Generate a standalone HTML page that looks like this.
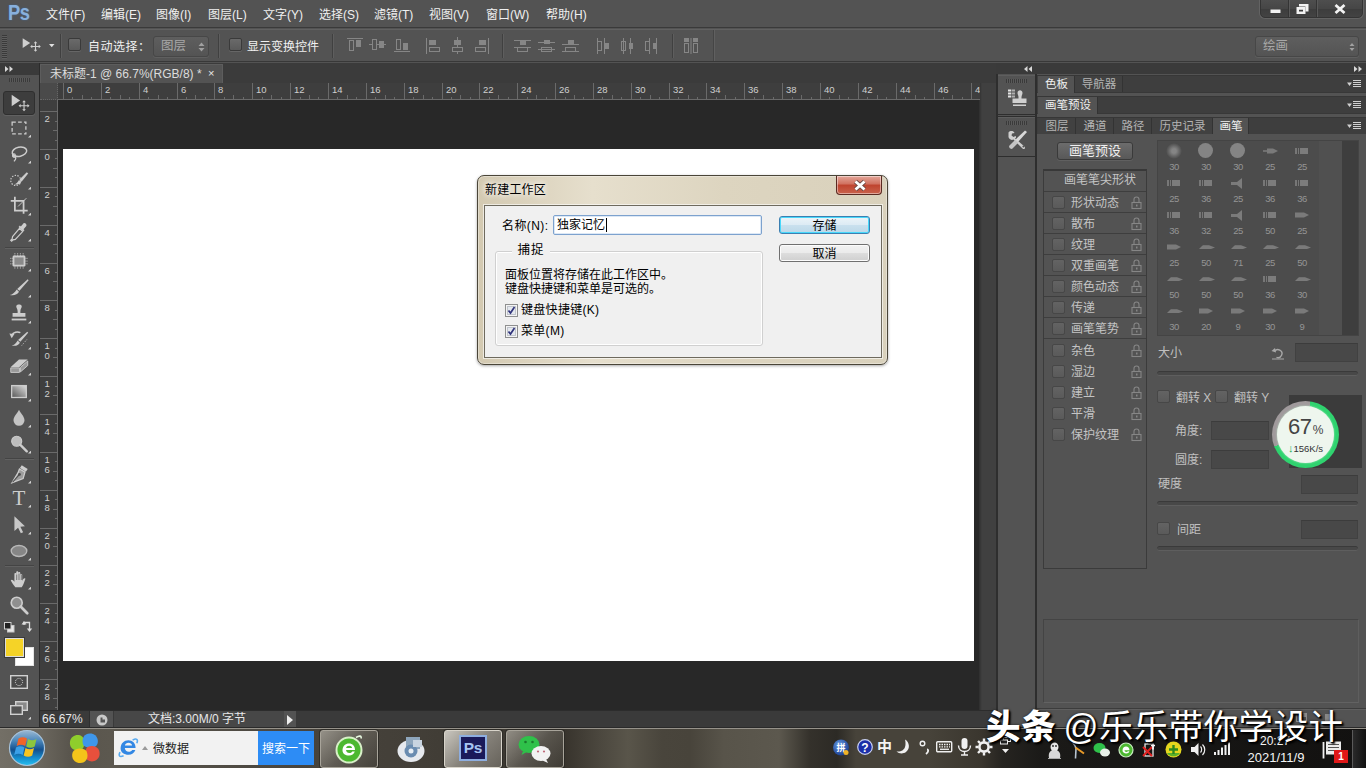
<!DOCTYPE html>
<html lang="zh-CN"><head><meta charset="utf-8"><title>Photoshop</title>
<style>
*{box-sizing:border-box;margin:0;padding:0}
html,body{width:1366px;height:768px;overflow:hidden;background:#535353}
body{font-family:"Liberation Sans","Noto Sans CJK SC",sans-serif;font-size:12px;color:#e6e6e6}
#root{position:relative;width:1366px;height:768px;overflow:hidden;background:#535353}
.abs{position:absolute}
/* menu bar */
#menubar{position:absolute;left:0;top:0;width:1366px;height:28px;background:#535353;border-bottom:1px solid #3a3a3a}
#menubar .ps{position:absolute;left:8px;top:-1px;font-size:22px;font-weight:bold;color:#88b0dc;letter-spacing:-0.5px;line-height:27px;transform:scaleX(0.83);transform-origin:0 0;text-shadow:0 0 2px rgba(60,110,170,0.8)}
#menubar .mi{position:absolute;top:1px;line-height:28px;font-size:12px;color:#f0f0f0;white-space:nowrap}
/* options bar */
#optbar{position:absolute;left:0;top:29px;width:1366px;height:33px;background:#535353;border-top:1px solid #616161;border-bottom:1px solid #383838}
/* doc tab strip */
#tabstrip{position:absolute;left:40px;top:63px;width:956px;height:20px;background:#3b3b3b}
#doctab{position:absolute;left:0;top:1px;width:183px;height:19px;background:#535353;border:1px solid #5d5d5d;border-bottom:none;color:#dcdcdc;font-size:12px;line-height:18px;padding-left:9px;white-space:nowrap}
/* canvas zone */
#canvaszone{position:absolute;left:40px;top:83px;width:940px;height:627px;background:#282828}
#paper{position:absolute;left:63px;top:149px;width:911px;height:512px;background:#fff}
#winctl{position:absolute;left:1260px;top:-1px;width:103px;height:19px;border:1px solid #343434;border-radius:0 0 5px 5px;background:linear-gradient(#4e4e4e,#464646 50%,#3d3d3d 55%,#434343);box-shadow:0 0 0 1px #636363;overflow:hidden}
.wdv{position:absolute;top:0;width:2px;height:19px;background:#343434;border-right:1px solid #5a5a5a}

.vsep{position:absolute;top:4px;width:2px;height:24px;background:#404040;border-right:1px solid #5e5e5e}
.cb{position:absolute;width:13px;height:13px;border:1px solid #3a3a3a;border-radius:2px;background:linear-gradient(#6a6a6a,#5a5a5a);box-shadow:0 1px 0 #666}
.dd{position:absolute;border:1px solid #474747;border-radius:3px;background:linear-gradient(#5e5e5e,#545454);box-shadow:0 1px 0 #5f5f5f}
#hruler{position:absolute;left:40px;top:83px;width:940px;height:17px;background:#3e3e3e;overflow:hidden}
#vruler{position:absolute;left:40px;top:100px;width:18px;height:610px;background:#3e3e3e;overflow:hidden}
#toolbar{position:absolute;left:0;top:63px;width:40px;height:665px;background:#535353;border-right:1px solid #2b2b2b}
#statusbar{position:absolute;left:40px;top:710px;width:956px;height:18px;background:#3a3a3a;border-top:1px solid #2c2c2c}
#dock{position:absolute;left:996px;top:63px;width:370px;height:665px;background:#535353}
#panels{position:absolute;left:41px;top:0;width:329px;height:665px}
.ptb{position:absolute;left:0;width:329px;height:18px;background:#3e3e3e;border-top:1px solid #373737;border-bottom:1px solid #383838}
.ptab{position:absolute;top:0;height:16px;line-height:17px;font-size:11.5px;color:#b4b4b4;text-align:center;padding-left:1px;border-right:1px solid #333;white-space:nowrap;background:#414141}
.ptab.on{background:#535353;color:#f0f0f0;height:17px;border-right:1px solid #333}
#pbody{position:absolute;left:0;top:71px;width:329px;height:575px;background:#535353;border-bottom:1px solid #3c3c3c;box-shadow:0 1px 0 #5f5f5f}
.pbtn{position:absolute;border:1px solid #3a3a3a;border-radius:3px;background:linear-gradient(#6c6c6c,#585858);color:#f0f0f0;font-size:13px;line-height:16px;text-align:center;box-shadow:0 1px 0 #606060}
#blist{position:absolute;left:6px;top:35px;width:104px;height:400px;border:1px solid #3b3b3b;border-top:2px solid #383838}
.lrow{position:absolute;left:0;width:102px}
.cb2{position:absolute;width:13px;height:13px;border:1px solid #474747;border-radius:2px;background:linear-gradient(#636363,#5a5a5a)}
#thumbs{position:absolute;left:120px;top:6px;width:202px;height:196px;background:#4c4c4c;border:1px solid #444;overflow:hidden}
#speed{position:absolute;left:276px;top:338px;width:67px;height:67px}
#speed .ring{position:absolute;left:0;top:0;width:67px;height:67px;border-radius:50%;background:conic-gradient(from 8deg,#2fd36f 0 67%,#a09a9c 67% 100%)}
#speed .inner{position:absolute;left:5px;top:5px;width:57px;height:57px;border-radius:50%;background:#eef6ee;color:#333;text-align:center;box-shadow:0 0 2px #bfe8cc}
#speed .pct{position:absolute;left:0;top:9px;width:57px;font-size:22px;line-height:24px;color:#444;letter-spacing:-0.3px}
#speed .pct span{font-size:12px;margin-left:1px}
#speed .rate{position:absolute;left:0;top:36px;width:57px;font-size:9.5px;line-height:12px;color:#333;white-space:nowrap}
#speed .rate b{color:#1fae55;font-weight:bold;font-size:11px}
#taskbar{position:absolute;left:0;top:728px;width:1366px;height:40px;background:linear-gradient(90deg,#736f66 0px,#6b675e 40px,#59554d 70px,#5c584f 110px,#48443d 300px,#433f38 410px,#38342d 565px,#4c483f 601px,#59554a 628px,#49453c 662px,#48443b 690px,#58544a 724px,#5c584e 779px,#34312b 810px,#2c2a25 837px,#47433a 856px,#47433a 929px,#3a362e 981px,#262420 1002px,#1b1a18 1040px,#121110 1366px);border-top:1px solid #96928a;box-shadow:0 -1px 0 #2a2a2a}
#orb{position:absolute;left:8px;top:0px;width:38px;height:38px}
.tbtn{position:absolute;top:1px;width:58px;height:38px;border:1px solid #a8a49a;border-radius:3px;background:linear-gradient(135deg,rgba(190,186,176,0.650),rgba(120,116,108,0.500) 50%,rgba(70,67,60,0.500));box-shadow:0 0 0 1px rgba(40,38,34,0.700)}
.tbtn.on{background:linear-gradient(135deg,rgba(225,222,214,0.850),rgba(160,156,148,0.750) 50%,rgba(120,116,108,0.700));border-color:#d8d4ca}
#dlg{position:absolute;left:477px;top:175px;width:411px;height:190px;border:1px solid #4a4538;border-radius:7px;background:linear-gradient(90deg,#d3c9b1,#e6dfcd 28%,#ddd5c0 60%,#d9d1bc);box-shadow:0 0 0 1px rgba(255,255,255,0.350) inset,0 1px 3px rgba(0,0,0,0.350)}
#dlg .ttl{position:absolute;left:7px;top:5px;line-height:18px;font-size:12px;color:#000;letter-spacing:0.200px;text-shadow:0 0 6px #fff,0 0 6px #fff}
#dlg .xbtn{position:absolute;left:358px;top:0;width:46px;height:19px;border:1px solid #5a2a22;border-top:none;border-radius:0 0 4px 4px;background:linear-gradient(#e4a79a,#d0705e 45%,#bf432e 50%,#c9634c);box-shadow:0 0 0 1px rgba(255,255,255,0.450) inset}
#dlg .client{position:absolute;left:6px;top:29px;width:398px;height:153px;background:#f0f0f0;border:1px solid #6e6a5e;box-shadow:0 0 0 1px rgba(255,255,255,0.600)}
.wbtn{position:absolute;width:91px;height:18px;border:1px solid #707070;border-radius:3px;background:linear-gradient(#f2f2f2,#ebebeb 48%,#dddddd 52%,#cfcfcf);color:#000;font-size:12px;line-height:19px;text-align:center;box-shadow:0 0 0 1px #fcfcfc inset}
.wbtn.def{border-color:#3c7fb1;box-shadow:0 0 0 1px #48d8fb inset;background:linear-gradient(#ecf4f9,#ddebf4 48%,#c9e0ee 52%,#bcd8e8)}
#wm{position:absolute;left:986px;top:703px;font-size:34.500px;line-height:48px;color:#fff;white-space:nowrap;text-shadow:2px 2px 2px #000,1px 1px 1px #000,0 0 3px rgba(0,0,0,0.600);letter-spacing:0.400px}
#wm b{letter-spacing:0.800px;margin-right:-3px}
#wm b{font-weight:900}

</style></head><body>
<div id="root">
<div id="menubar"><div class="ps">Ps</div><div class="mi" style="left:46px">文件(F)</div><div class="mi" style="left:101px">编辑(E)</div><div class="mi" style="left:156px">图像(I)</div><div class="mi" style="left:208px">图层(L)</div><div class="mi" style="left:263px">文字(Y)</div><div class="mi" style="left:319px">选择(S)</div><div class="mi" style="left:374px">滤镜(T)</div><div class="mi" style="left:429px">视图(V)</div><div class="mi" style="left:486px">窗口(W)</div><div class="mi" style="left:546px">帮助(H)</div><div id="winctl">
<div class="wdv" style="left:27px"></div><div class="wdv" style="left:55px"></div>
<svg class="abs" style="left:0;top:0" width="103" height="18" viewBox="0 0 103 18"><rect x="9.500" y="9.500" width="10" height="3.500" fill="#f2f2f2"/><path d="M38 4h9.500v7.500h-3v-5h-6.500z" fill="#f2f2f2"/><path d="M35.500 7h9v7h-9z M38 9.800v1.700h4v-1.700z" fill="#f2f2f2" fill-rule="evenodd"/><path d="M74.500 5l9 8M83.500 5l-9 8" stroke="#f2f2f2" stroke-width="2.800" fill="none"/></svg>
</div></div>
<div id="optbar"><div class="abs" style="left:2px;top:5px;width:5px;height:24px;background:repeating-linear-gradient(#3a3a3a 0 1px,#5e5e5e 1px 2px)"></div><svg class="abs" style="left:22px;top:8px" width="20" height="14" viewBox="0 0 20 14" ><path d="M0.700 0.300v9.800l7.500-5.200z" fill="#cfcfcf"/><path d="M13.500 4.500v8M9.500 8.500h8" stroke="#cfcfcf" stroke-width="1.100"/><path d="M13.500 3.200l-1.800 2.100h3.600zM13.500 13.800l-1.800-2.100h3.600zM8.200 8.500l2.100-1.800v3.600zM18.800 8.500l-2.100-1.800v3.600z" fill="#cfcfcf"/></svg><svg class="abs" style="left:49px;top:14px" width="6" height="4" viewBox="0 0 6 4" ><path d="M0 0h5.500l-2.750 3.200z" fill="#e0e0e0"/></svg><div class="vsep" style="left:60px"></div><div class="cb" style="left:68px;top:8px"></div><div class="abs" style="left:88px;top:1px;line-height:32px;font-size:12px;color:#f0f0f0;white-space:nowrap;letter-spacing:0.5px">自动选择：</div><div class="dd" style="left:153px;top:6px;width:56px;height:21px"><span style="position:absolute;left:7px;top:0;line-height:19px;color:#a8a8a8;font-size:12.5px">图层</span><svg class="abs" style="left:44px;top:5px" width="7" height="10" viewBox="0 0 7 10" ><path d="M0.500 4l3-3.500 3 3.500zM0.500 6l3 3.500 3-3.500z" fill="#a0a0a0"/></svg></div><div class="vsep" style="left:218px"></div><div class="cb" style="left:229px;top:8px"></div><div class="abs" style="left:247px;top:1px;line-height:32px;font-size:12px;color:#f0f0f0;white-space:nowrap">显示变换控件</div><div class="vsep" style="left:332px"></div><svg class="abs" style="left:346px;top:7px" width="20" height="18" viewBox="0 0 20 18" ><path d="M1 1.500h16" stroke="#868686"/><rect x="3.500" y="3.500" width="4" height="10" fill="none" stroke="#868686"/><rect x="10" y="3" width="5" height="7" fill="#868686"/></svg><svg class="abs" style="left:369px;top:7px" width="20" height="18" viewBox="0 0 20 18" ><path d="M0 7.500h17" stroke="#868686"/><rect x="3.500" y="2.500" width="4" height="10" fill="#535353" stroke="#868686"/><rect x="10" y="4" width="5" height="7" fill="#868686"/></svg><svg class="abs" style="left:393px;top:7px" width="20" height="18" viewBox="0 0 20 18" ><path d="M1 14.500h16" stroke="#868686"/><rect x="3.500" y="2.500" width="4" height="10" fill="none" stroke="#868686"/><rect x="10" y="6" width="5" height="7" fill="#868686"/></svg><svg class="abs" style="left:425px;top:7px" width="20" height="18" viewBox="0 0 20 18" ><path d="M1.500 1v16" stroke="#868686"/><rect x="4" y="3" width="7" height="5" fill="#868686"/><rect x="4.500" y="10.500" width="10" height="4" fill="none" stroke="#868686"/></svg><svg class="abs" style="left:449px;top:7px" width="20" height="18" viewBox="0 0 20 18" ><path d="M8.500 0v17" stroke="#868686"/><rect x="5" y="3" width="7" height="5" fill="#868686"/><rect x="3.500" y="10.500" width="10" height="4" fill="#535353" stroke="#868686"/></svg><svg class="abs" style="left:473px;top:7px" width="20" height="18" viewBox="0 0 20 18" ><path d="M15.500 1v16" stroke="#868686"/><rect x="6" y="3" width="7" height="5" fill="#868686"/><rect x="2.500" y="10.500" width="10" height="4" fill="none" stroke="#868686"/></svg><div class="vsep" style="left:502px"></div><svg class="abs" style="left:514px;top:7px" width="20" height="18" viewBox="0 0 20 18" ><path d="M0 3.500h17M0 10.500h17" stroke="#868686"/><rect x="6" y="4" width="6" height="4" fill="#868686"/><rect x="3.500" y="10.500" width="10" height="4" fill="none" stroke="#868686"/></svg><svg class="abs" style="left:538px;top:7px" width="20" height="18" viewBox="0 0 20 18" ><path d="M0 5.500h17M0 12.500h17" stroke="#868686"/><rect x="6" y="3" width="6" height="4" fill="#868686"/><rect x="3.500" y="10.500" width="10" height="4" fill="none" stroke="#868686"/></svg><svg class="abs" style="left:562px;top:7px" width="20" height="18" viewBox="0 0 20 18" ><path d="M0 7.500h17M0 14.500h17" stroke="#868686"/><rect x="6" y="3" width="6" height="4" fill="#868686"/><rect x="3.500" y="10.500" width="10" height="4" fill="none" stroke="#868686"/></svg><svg class="abs" style="left:595px;top:7px" width="20" height="18" viewBox="0 0 20 18" ><path d="M2.500 1v16M9.500 1v16" stroke="#868686"/><rect x="2.500" y="4.500" width="4" height="9" fill="none" stroke="#868686"/><rect x="10" y="6" width="4" height="6" fill="#868686"/></svg><svg class="abs" style="left:619px;top:7px" width="20" height="18" viewBox="0 0 20 18" ><path d="M4.500 1v16M11.500 1v16" stroke="#868686"/><rect x="2.500" y="4.500" width="4" height="9" fill="none" stroke="#868686"/><rect x="10" y="6" width="4" height="6" fill="#868686"/></svg><svg class="abs" style="left:643px;top:7px" width="20" height="18" viewBox="0 0 20 18" ><path d="M6.500 1v16M13.500 1v16" stroke="#868686"/><rect x="2.500" y="4.500" width="4" height="9" fill="none" stroke="#868686"/><rect x="10" y="6" width="4" height="6" fill="#868686"/></svg><div class="vsep" style="left:672px"></div><svg class="abs" style="left:683px;top:7px" width="18" height="18" viewBox="0 0 18 18" ><rect x="1" y="1" width="5" height="4" fill="#868686"/><rect x="10" y="1" width="5" height="4" fill="#868686"/><rect x="1.500" y="6.500" width="4" height="9" fill="none" stroke="#868686"/><rect x="10.500" y="6.500" width="4" height="9" fill="none" stroke="#868686"/><path d="M8 1v16" stroke="#868686"/></svg><div class="vsep" style="left:713px;top:0;height:31px;background:#454545;border-right:1px solid #606060"></div><div class="dd" style="left:1255px;top:6px;width:104px;height:21px"><span style="position:absolute;left:7px;top:0;line-height:19px;color:#a8a8a8;font-size:12.5px">绘画</span><svg class="abs" style="left:93px;top:5px" width="7" height="10" viewBox="0 0 7 10" ><path d="M0.500 4l2.500-3 2.500 3zM0.500 6l2.500 3 2.500-3z" fill="#a0a0a0"/></svg></div></div>
<div id="tabstrip"><div id="doctab">未标题-1 @ 66.7%(RGB/8) * <span style="position:absolute;left:167px;top:-1px;font-size:11px;color:#e8e8e8">×</span></div></div>
<div id="canvaszone"></div><div class="abs" style="left:979px;top:83px;width:17px;height:627px;background:linear-gradient(90deg,#2e2e2e,#404040 3px)"></div><div id="hruler"><svg class="abs" style="left:0;top:0" width="940" height="17" viewBox="0 0 940 17"><path d="M23.5 0v17M32.5 14v3M42.5 12v5M51.5 14v3M61.5 0v17M70.5 14v3M80.5 12v5M89.5 14v3M99.5 0v17M108.5 14v3M118.5 12v5M127.5 14v3M137.5 0v17M146.5 14v3M155.5 12v5M165.5 14v3M174.5 0v17M184.5 14v3M193.5 12v5M203.5 14v3M212.5 0v17M222.5 14v3M231.5 12v5M241.5 14v3M250.5 0v17M260.5 14v3M269.5 12v5M278.5 14v3M288.5 0v17M297.5 14v3M307.5 12v5M316.5 14v3M326.5 0v17M335.5 14v3M345.5 12v5M354.5 14v3M364.5 0v17M373.5 14v3M383.5 12v5M392.5 14v3M402.5 0v17M411.5 14v3M420.5 12v5M430.5 14v3M439.5 0v17M449.5 14v3M458.5 12v5M468.5 14v3M477.5 0v17M487.5 14v3M496.5 12v5M506.5 14v3M515.5 0v17M525.5 14v3M534.5 12v5M543.5 14v3M553.5 0v17M562.5 14v3M572.5 12v5M581.5 14v3M591.5 0v17M600.5 14v3M610.5 12v5M619.5 14v3M629.5 0v17M638.5 14v3M648.5 12v5M657.5 14v3M666.5 0v17M676.5 14v3M685.5 12v5M695.5 14v3M704.5 0v17M714.5 14v3M723.5 12v5M733.5 14v3M742.5 0v17M752.5 14v3M761.5 12v5M771.5 14v3M780.5 0v17M789.5 14v3M799.5 12v5M808.5 14v3M818.5 0v17M827.5 14v3M837.5 12v5M846.5 14v3M856.5 0v17M865.5 14v3M875.5 12v5M884.5 14v3M894.5 0v17M903.5 14v3M912.5 12v5M922.5 14v3M931.5 0v17" stroke="#6a6a6a" stroke-width="1" fill="none"/><path d="M18 16.500h922" stroke="#6a6a6a" stroke-width="1"/><text x="27" y="10" font-size="9.500" fill="#cfcfcf" font-family="Liberation Sans, sans-serif">0</text><text x="65" y="10" font-size="9.500" fill="#cfcfcf" font-family="Liberation Sans, sans-serif">2</text><text x="103" y="10" font-size="9.500" fill="#cfcfcf" font-family="Liberation Sans, sans-serif">4</text><text x="141" y="10" font-size="9.500" fill="#cfcfcf" font-family="Liberation Sans, sans-serif">6</text><text x="178" y="10" font-size="9.500" fill="#cfcfcf" font-family="Liberation Sans, sans-serif">8</text><text x="216" y="10" font-size="9.500" fill="#cfcfcf" font-family="Liberation Sans, sans-serif">10</text><text x="254" y="10" font-size="9.500" fill="#cfcfcf" font-family="Liberation Sans, sans-serif">12</text><text x="292" y="10" font-size="9.500" fill="#cfcfcf" font-family="Liberation Sans, sans-serif">14</text><text x="330" y="10" font-size="9.500" fill="#cfcfcf" font-family="Liberation Sans, sans-serif">16</text><text x="368" y="10" font-size="9.500" fill="#cfcfcf" font-family="Liberation Sans, sans-serif">18</text><text x="406" y="10" font-size="9.500" fill="#cfcfcf" font-family="Liberation Sans, sans-serif">20</text><text x="443" y="10" font-size="9.500" fill="#cfcfcf" font-family="Liberation Sans, sans-serif">22</text><text x="481" y="10" font-size="9.500" fill="#cfcfcf" font-family="Liberation Sans, sans-serif">24</text><text x="519" y="10" font-size="9.500" fill="#cfcfcf" font-family="Liberation Sans, sans-serif">26</text><text x="557" y="10" font-size="9.500" fill="#cfcfcf" font-family="Liberation Sans, sans-serif">28</text><text x="595" y="10" font-size="9.500" fill="#cfcfcf" font-family="Liberation Sans, sans-serif">30</text><text x="633" y="10" font-size="9.500" fill="#cfcfcf" font-family="Liberation Sans, sans-serif">32</text><text x="670" y="10" font-size="9.500" fill="#cfcfcf" font-family="Liberation Sans, sans-serif">34</text><text x="708" y="10" font-size="9.500" fill="#cfcfcf" font-family="Liberation Sans, sans-serif">36</text><text x="746" y="10" font-size="9.500" fill="#cfcfcf" font-family="Liberation Sans, sans-serif">38</text><text x="784" y="10" font-size="9.500" fill="#cfcfcf" font-family="Liberation Sans, sans-serif">40</text><text x="822" y="10" font-size="9.500" fill="#cfcfcf" font-family="Liberation Sans, sans-serif">42</text><text x="860" y="10" font-size="9.500" fill="#cfcfcf" font-family="Liberation Sans, sans-serif">44</text><text x="898" y="10" font-size="9.500" fill="#cfcfcf" font-family="Liberation Sans, sans-serif">46</text><text x="935" y="10" font-size="9.500" fill="#cfcfcf" font-family="Liberation Sans, sans-serif">48</text></svg><div class="abs" style="left:0;top:0;width:18px;height:17px;background:#4a4a4a;border-right:1px dotted #666;border-bottom:1px dotted #666"></div></div><div id="vruler"><svg class="abs" style="left:0;top:0" width="18" height="610" viewBox="0 0 18 610"><path d="M0 11.5h18M15 21.5h3M13 30.5h5M15 40.5h3M0 49.5h18M15 58.5h3M13 68.5h5M15 77.5h3M0 87.5h18M15 96.5h3M13 106.5h5M15 115.5h3M0 125.5h18M15 134.5h3M13 144.5h5M15 153.5h3M0 163.5h18M15 172.5h3M13 181.5h5M15 191.5h3M0 200.5h18M15 210.5h3M13 219.5h5M15 229.5h3M0 238.5h18M15 248.5h3M13 257.5h5M15 267.5h3M0 276.5h18M15 286.5h3M13 295.5h5M15 304.5h3M0 314.5h18M15 323.5h3M13 333.5h5M15 342.5h3M0 352.5h18M15 361.5h3M13 371.5h5M15 380.5h3M0 390.5h18M15 399.5h3M13 409.5h5M15 418.5h3M0 428.5h18M15 437.5h3M13 446.5h5M15 456.5h3M0 465.5h18M15 475.5h3M13 484.5h5M15 494.5h3M0 503.5h18M15 513.5h3M13 522.5h5M15 532.5h3M0 541.5h18M15 551.5h3M13 560.5h5M15 569.5h3M0 579.5h18M15 588.5h3M13 598.5h5M15 607.5h3" stroke="#6a6a6a" stroke-width="1" fill="none"/><path d="M17.500 0v610" stroke="#6a6a6a" stroke-width="1"/><text x="4.500" y="22" font-size="9.500" fill="#cfcfcf" font-family="Liberation Sans, sans-serif">2</text><text x="4.500" y="60" font-size="9.500" fill="#cfcfcf" font-family="Liberation Sans, sans-serif">0</text><text x="4.500" y="98" font-size="9.500" fill="#cfcfcf" font-family="Liberation Sans, sans-serif">2</text><text x="4.500" y="136" font-size="9.500" fill="#cfcfcf" font-family="Liberation Sans, sans-serif">4</text><text x="4.500" y="174" font-size="9.500" fill="#cfcfcf" font-family="Liberation Sans, sans-serif">6</text><text x="4.500" y="211" font-size="9.500" fill="#cfcfcf" font-family="Liberation Sans, sans-serif">8</text><text x="4.500" y="249" font-size="9.500" fill="#cfcfcf" font-family="Liberation Sans, sans-serif">1</text><text x="4.500" y="258.5" font-size="9.500" fill="#cfcfcf" font-family="Liberation Sans, sans-serif">0</text><text x="4.500" y="287" font-size="9.500" fill="#cfcfcf" font-family="Liberation Sans, sans-serif">1</text><text x="4.500" y="296.5" font-size="9.500" fill="#cfcfcf" font-family="Liberation Sans, sans-serif">2</text><text x="4.500" y="325" font-size="9.500" fill="#cfcfcf" font-family="Liberation Sans, sans-serif">1</text><text x="4.500" y="334.5" font-size="9.500" fill="#cfcfcf" font-family="Liberation Sans, sans-serif">4</text><text x="4.500" y="363" font-size="9.500" fill="#cfcfcf" font-family="Liberation Sans, sans-serif">1</text><text x="4.500" y="372.5" font-size="9.500" fill="#cfcfcf" font-family="Liberation Sans, sans-serif">6</text><text x="4.500" y="401" font-size="9.500" fill="#cfcfcf" font-family="Liberation Sans, sans-serif">1</text><text x="4.500" y="410.5" font-size="9.500" fill="#cfcfcf" font-family="Liberation Sans, sans-serif">8</text><text x="4.500" y="439" font-size="9.500" fill="#cfcfcf" font-family="Liberation Sans, sans-serif">2</text><text x="4.500" y="448.5" font-size="9.500" fill="#cfcfcf" font-family="Liberation Sans, sans-serif">0</text><text x="4.500" y="476" font-size="9.500" fill="#cfcfcf" font-family="Liberation Sans, sans-serif">2</text><text x="4.500" y="485.5" font-size="9.500" fill="#cfcfcf" font-family="Liberation Sans, sans-serif">2</text><text x="4.500" y="514" font-size="9.500" fill="#cfcfcf" font-family="Liberation Sans, sans-serif">2</text><text x="4.500" y="523.5" font-size="9.500" fill="#cfcfcf" font-family="Liberation Sans, sans-serif">4</text><text x="4.500" y="552" font-size="9.500" fill="#cfcfcf" font-family="Liberation Sans, sans-serif">2</text><text x="4.500" y="561.5" font-size="9.500" fill="#cfcfcf" font-family="Liberation Sans, sans-serif">6</text><text x="4.500" y="590" font-size="9.500" fill="#cfcfcf" font-family="Liberation Sans, sans-serif">2</text><text x="4.500" y="599.5" font-size="9.500" fill="#cfcfcf" font-family="Liberation Sans, sans-serif">8</text></svg></div><div id="paper"></div>
<div id="toolbar"><div class="abs" style="left:0;top:0;width:39px;height:12px;background:#3a3a3a"></div><svg class="abs" style="left:5px;top:3px" width="9" height="7" viewBox="0 0 9 7" ><path d="M0 0l3.500 3-3.500 3zM4.500 0l3.500 3-3.500 3z" fill="#d8d8d8"/></svg><div class="abs" style="left:9px;top:15px;width:21px;height:4px;background:repeating-linear-gradient(90deg,#3a3a3a 0 1px,#5a5a5a 1px 2px)"></div><div class="abs" style="left:3px;top:28px;width:32px;height:24px;background:#3d3d3d;border:1px solid #2f2f2f;border-radius:3px;box-shadow:0 1px 0 #616161"></div><svg class="abs" style="left:8px;top:29px" width="22" height="22" viewBox="0 0 24 24"><path d="M4 3v12.500l9.200-6.300z" fill="#cdcdcd"/><path d="M17.500 10.500v9M13 15h9" stroke="#cdcdcd" stroke-width="1.200"/><path d="M17.500 9l-2 2.300h4zM17.500 21l-2-2.300h4zM11.500 15l2.300-2v4zM23.500 15l-2.300-2v4z" fill="#cdcdcd"/></svg><svg class="abs" style="left:8px;top:54px" width="22" height="22" viewBox="0 0 24 24"><rect x="4.500" y="5.500" width="15" height="13" fill="none" stroke="#cdcdcd" stroke-width="1.400" stroke-dasharray="4 2.500"/></svg><svg class="abs" style="left:27.5px;top:71px" width="3.5" height="3.5" viewBox="0 0 3.5 3.5" ><path d="M3.500 0v3.500h-3.500z" fill="#d0d0d0"/></svg><svg class="abs" style="left:8px;top:80px" width="22" height="22" viewBox="0 0 24 24"><ellipse cx="12.500" cy="9.500" rx="8" ry="5" fill="none" stroke="#cdcdcd" stroke-width="1.600" transform="rotate(-12 12.500 9.500)"/><path d="M6.500 12.500c-1.500 1-1.500 3 0.500 3s2 2-0.500 4.500" fill="none" stroke="#cdcdcd" stroke-width="1.400"/><circle cx="6.500" cy="13.500" r="1.600" fill="none" stroke="#cdcdcd" stroke-width="1.200"/></svg><svg class="abs" style="left:27.5px;top:97px" width="3.5" height="3.5" viewBox="0 0 3.5 3.5" ><path d="M3.500 0v3.500h-3.500z" fill="#d0d0d0"/></svg><svg class="abs" style="left:8px;top:106px" width="22" height="22" viewBox="0 0 24 24"><circle cx="8.500" cy="12.500" r="5.500" fill="none" stroke="#cdcdcd" stroke-width="1.300" stroke-dasharray="1.500 1.500"/><path d="M20.500 3.500l1.500 1.500-7 8.500-2.500-2z" fill="#cdcdcd"/><path d="M12 12l2.500 2c-1 2.500-4 3.500-7 2.500 2-0.500 3-2 4.500-4.500z" fill="#cdcdcd"/></svg><svg class="abs" style="left:27.5px;top:123px" width="3.5" height="3.5" viewBox="0 0 3.5 3.5" ><path d="M3.500 0v3.500h-3.500z" fill="#d0d0d0"/></svg><svg class="abs" style="left:8px;top:132px" width="22" height="22" viewBox="0 0 24 24"><path d="M7.500 2v15h14M3 6.500h14v14" fill="none" stroke="#cdcdcd" stroke-width="1.900"/><path d="M20 3.500l-9 9" stroke="#cdcdcd" stroke-width="1"/></svg><svg class="abs" style="left:27.5px;top:149px" width="3.5" height="3.5" viewBox="0 0 3.5 3.5" ><path d="M3.500 0v3.500h-3.500z" fill="#d0d0d0"/></svg><svg class="abs" style="left:8px;top:158px" width="22" height="22" viewBox="0 0 24 24"><path d="M17 2.500c1.500-1 4 1.500 3 3l-3 3.500 1 1-1.500 1.500-5-5 1.500-1.500 1 1z" fill="#cdcdcd"/><path d="M12.500 8l3.500 3.500-8 8.500-2.500 0.500-1.500 1.500-1-1 1.500-1.500 0.500-2.500z" fill="none" stroke="#cdcdcd" stroke-width="1.300"/></svg><svg class="abs" style="left:27.5px;top:175px" width="3.5" height="3.5" viewBox="0 0 3.5 3.5" ><path d="M3.500 0v3.500h-3.500z" fill="#d0d0d0"/></svg><svg class="abs" style="left:8px;top:188px" width="22" height="22" viewBox="0 0 24 24"><rect x="5" y="5" width="14" height="12" rx="1.500" fill="#cdcdcd"/><path d="M7.500 2.500v17M10.500 2.500v17M13.500 2.500v17M16.500 2.500v17M2.500 8h19M2.500 11h19M2.500 14h19" stroke="#cdcdcd" stroke-width="1" stroke-dasharray="1.200 1"/><rect x="7" y="7" width="10" height="8" fill="#8a8a8a"/></svg><svg class="abs" style="left:27.5px;top:205px" width="3.5" height="3.5" viewBox="0 0 3.5 3.5" ><path d="M3.500 0v3.500h-3.500z" fill="#d0d0d0"/></svg><svg class="abs" style="left:8px;top:214px" width="22" height="22" viewBox="0 0 24 24"><path d="M21.500 2.500l1 1-10 11.500-2.500-2z" fill="#cdcdcd"/><path d="M9.500 13.500l2.500 2.500c-1.500 3-5.500 4.500-10 3.500 3-0.500 5-2.500 7.500-6z" fill="#cdcdcd"/></svg><svg class="abs" style="left:27.5px;top:231px" width="3.5" height="3.5" viewBox="0 0 3.5 3.5" ><path d="M3.500 0v3.500h-3.500z" fill="#d0d0d0"/></svg><svg class="abs" style="left:8px;top:240px" width="22" height="22" viewBox="0 0 24 24"><path d="M9 3.500c0-2.500 6-2.500 6 0 0 2-1.500 3-1.500 5.500v2h5.500v4h-14v-4h5.500v-2c0-2.500-1.500-3.500-1.500-5.500z" fill="#cdcdcd"/><rect x="4" y="17" width="16" height="2" fill="#cdcdcd"/></svg><svg class="abs" style="left:27.5px;top:257px" width="3.5" height="3.5" viewBox="0 0 3.5 3.5" ><path d="M3.500 0v3.500h-3.500z" fill="#d0d0d0"/></svg><svg class="abs" style="left:8px;top:266px" width="22" height="22" viewBox="0 0 24 24"><path d="M21 3l1 1-8.500 10-2.500-2z" fill="#cdcdcd"/><path d="M10.500 12.500l2.500 2.500c-1.500 3-5 4-9 3 3-0.500 4.500-2 6.500-5.500z" fill="#cdcdcd"/><path d="M4 7c2-3.500 6-4.500 9.500-3" fill="none" stroke="#cdcdcd" stroke-width="1.600"/><path d="M1.500 5l5.500 0.500-3 4.500z" fill="#cdcdcd"/><path d="M15 18l6-7" stroke="#cdcdcd" stroke-width="1" stroke-dasharray="1 1.500"/></svg><svg class="abs" style="left:27.5px;top:283px" width="3.5" height="3.5" viewBox="0 0 3.5 3.5" ><path d="M3.500 0v3.500h-3.500z" fill="#d0d0d0"/></svg><svg class="abs" style="left:8px;top:292px" width="22" height="22" viewBox="0 0 24 24"><path d="M3 13l9-8h9.500l-9 8z" fill="#cdcdcd"/><path d="M3 14v5h9.500v-5zM13.500 13.500l8-7v5l-8 7z" fill="#9a9a9a" stroke="#cdcdcd" stroke-width="1"/></svg><svg class="abs" style="left:27.5px;top:309px" width="3.5" height="3.5" viewBox="0 0 3.5 3.5" ><path d="M3.500 0v3.500h-3.500z" fill="#d0d0d0"/></svg><svg class="abs" style="left:8px;top:318px" width="22" height="22" viewBox="0 0 24 24"><defs><linearGradient id="gg" x1="0" y1="1" x2="1" y2="0"><stop offset="0" stop-color="#555"/><stop offset="1" stop-color="#ddd"/></linearGradient></defs><rect x="4" y="5" width="16" height="13" fill="url(#gg)" stroke="#cdcdcd" stroke-width="1.400"/></svg><svg class="abs" style="left:27.5px;top:335px" width="3.5" height="3.5" viewBox="0 0 3.5 3.5" ><path d="M3.500 0v3.500h-3.500z" fill="#d0d0d0"/></svg><svg class="abs" style="left:8px;top:344px" width="22" height="22" viewBox="0 0 24 24"><path d="M12 3c1.500 4 6 7 6 11.500a6 6 0 0 1-12 0c0-4.500 4.500-7.500 6-11.500z" fill="#c4c4c4"/></svg><svg class="abs" style="left:27.5px;top:361px" width="3.5" height="3.5" viewBox="0 0 3.5 3.5" ><path d="M3.500 0v3.500h-3.500z" fill="#d0d0d0"/></svg><svg class="abs" style="left:8px;top:370px" width="22" height="22" viewBox="0 0 24 24"><circle cx="9.500" cy="9" r="5.500" fill="#bdbdbd" stroke="#cdcdcd" stroke-width="1.200"/><path d="M13.500 13l7 7" stroke="#cdcdcd" stroke-width="2.600" stroke-linecap="round"/></svg><svg class="abs" style="left:27.5px;top:387px" width="3.5" height="3.5" viewBox="0 0 3.5 3.5" ><path d="M3.500 0v3.500h-3.500z" fill="#d0d0d0"/></svg><svg class="abs" style="left:8px;top:400px" width="22" height="22" viewBox="0 0 24 24"><path d="M15 2.500l6.500 4-2 3-6.500-4z" fill="#cdcdcd"/><path d="M12.500 6.500l6 3.500-2 7-12 4.500 6.500-11z" fill="#9c9c9c" stroke="#cdcdcd" stroke-width="1.400"/><path d="M5 21l7-8" stroke="#4a4a4a" stroke-width="1.200"/><circle cx="12.500" cy="12.500" r="1.500" fill="#4a4a4a"/></svg><svg class="abs" style="left:27.5px;top:417px" width="3.5" height="3.5" viewBox="0 0 3.5 3.5" ><path d="M3.500 0v3.500h-3.500z" fill="#d0d0d0"/></svg><svg class="abs" style="left:8px;top:424px" width="22" height="22" viewBox="0 0 24 24"><text x="12" y="20" text-anchor="middle" font-family="Liberation Serif, serif" font-size="23" fill="#cdcdcd">T</text></svg><svg class="abs" style="left:27.5px;top:441px" width="3.5" height="3.5" viewBox="0 0 3.5 3.5" ><path d="M3.500 0v3.500h-3.500z" fill="#d0d0d0"/></svg><svg class="abs" style="left:8px;top:451px" width="22" height="22" viewBox="0 0 24 24"><path d="M7 2.500v16l4-3.500 3 6 2.500-1.200-3-6 5-0.500z" fill="#c8c8c8"/></svg><svg class="abs" style="left:27.5px;top:468px" width="3.5" height="3.5" viewBox="0 0 3.5 3.5" ><path d="M3.500 0v3.500h-3.500z" fill="#d0d0d0"/></svg><svg class="abs" style="left:8px;top:477px" width="22" height="22" viewBox="0 0 24 24"><ellipse cx="12" cy="12" rx="8.500" ry="6" fill="#868686" stroke="#b8b8b8" stroke-width="1.500"/></svg><svg class="abs" style="left:27.5px;top:494px" width="3.5" height="3.5" viewBox="0 0 3.5 3.5" ><path d="M3.500 0v3.500h-3.500z" fill="#d0d0d0"/></svg><svg class="abs" style="left:8px;top:506px" width="22" height="22" viewBox="0 0 24 24"><path d="M8 20c-2-2.500-3.500-5-5-7.500 1-1.500 2.500-0.500 4 1.500v-8.500c0-1.500 2-1.500 2 0v-2c0-1.500 2.200-1.500 2.200 0v1c0-1.500 2.200-1.500 2.200 0v2c0-1.500 2.100-1.500 2.100 0v6.500c1-2 2-3.500 3.500-2.500-1 3-2 6-4 9.500z" fill="#cdcdcd"/><path d="M9.500 6v6M12 5v7M14.500 6v6" stroke="#535353" stroke-width="0.800"/></svg><svg class="abs" style="left:27.5px;top:523px" width="3.5" height="3.5" viewBox="0 0 3.5 3.5" ><path d="M3.500 0v3.500h-3.500z" fill="#d0d0d0"/></svg><svg class="abs" style="left:8px;top:531px" width="22" height="22" viewBox="0 0 24 24"><circle cx="9.500" cy="9.500" r="6" fill="#8f8f8f" stroke="#cdcdcd" stroke-width="1.800"/><path d="M14 14l7 7" stroke="#cdcdcd" stroke-width="3" stroke-linecap="round"/></svg><div class="abs" style="left:5px;top:184px;width:29px;height:2px;background:#444;border-bottom:1px solid #616161"></div><div class="abs" style="left:5px;top:395px;width:29px;height:2px;background:#444;border-bottom:1px solid #616161"></div><div class="abs" style="left:5px;top:502px;width:29px;height:2px;background:#444;border-bottom:1px solid #616161"></div><svg class="abs" style="left:3px;top:558px" width="13" height="13" viewBox="0 0 13 13" ><rect x="4.500" y="4.500" width="6.500" height="6.500" fill="#e8e8e8" stroke="#c8c8c8"/><rect x="1.500" y="1.500" width="6.500" height="6.500" fill="#222" stroke="#d0d0d0"/></svg><svg class="abs" style="left:21px;top:556px" width="14" height="14" viewBox="0 0 14 14" ><path d="M3 6v-2.500h5.500v6.500" fill="none" stroke="#ddd" stroke-width="1.300"/><path d="M0.500 5.500l2.500-3.500 2.500 3.500zM5.800 9.500h5.400l-2.700 3.500z" fill="#ddd"/></svg><div class="abs" style="left:15px;top:584px;width:19px;height:19px;background:#fff;border:1px solid #e4e4e4"></div><div class="abs" style="left:5px;top:575px;width:19px;height:19px;background:#f5d327;border:1px solid #dcdcdc;box-shadow:0 0 0 1px #3a3a3a"></div><svg class="abs" style="left:10px;top:612px" width="18" height="14" viewBox="0 0 18 14" ><rect x="0.700" y="0.700" width="16.600" height="12.600" fill="#4a4a4a" stroke="#d0d0d0" stroke-width="1.400"/><circle cx="9" cy="7" r="3.600" fill="none" stroke="#e0e0e0" stroke-width="1" stroke-dasharray="1 1"/></svg><svg class="abs" style="left:10px;top:638px" width="18" height="15" viewBox="0 0 18 15" ><rect x="5.700" y="0.700" width="11.600" height="8.600" fill="#8a8a8a" stroke="#d0d0d0" stroke-width="1.400"/><rect x="0.700" y="4.700" width="11.600" height="8.600" fill="#535353" stroke="#d0d0d0" stroke-width="1.400"/></svg><svg class="abs" style="left:27.5px;top:653px" width="3.5" height="3.5" viewBox="0 0 3.5 3.5" ><path d="M3.500 0v3.500h-3.500z" fill="#d0d0d0"/></svg></div>
<div id="statusbar"><div class="abs" style="left:2px;top:0;line-height:17px;font-size:12px;color:#e8e8e8">66.67%</div><div class="abs" style="left:49px;top:0;width:24px;height:17px;background:#535353;border-left:1px solid #2e2e2e"></div><svg class="abs" style="left:56px;top:3px" width="12" height="12" viewBox="0 0 12 12" ><circle cx="6" cy="6" r="5.500" fill="#c8c8c8"/><path d="M4.500 3.500v5h4.500v-3h-2.500v-2z" fill="#555"/></svg><div class="abs" style="left:73px;top:0;width:171px;height:17px;background:#474747;border-left:1px solid #3a3a3a"></div><div class="abs" style="left:108px;top:0;line-height:17px;font-size:12px;color:#e8e8e8;white-space:nowrap">文档:3.00M/0 字节</div><div class="abs" style="left:244px;top:0;width:12px;height:17px;background:#535353"></div><svg class="abs" style="left:246px;top:4px" width="8" height="10" viewBox="0 0 8 10" ><path d="M1 0l6 5-6 5z" fill="#eee"/></svg></div>
<div id="dock"><div class="abs" style="left:0;top:0;width:370px;height:11px;background:#3a3a3a"></div><svg class="abs" style="left:28px;top:3px" width="9" height="7" viewBox="0 0 9 7" ><path d="M3.500 0l-3.500 3 3.500 3zM8 0l-3.500 3 3.500 3z" fill="#d8d8d8"/></svg><svg class="abs" style="left:358px;top:3px" width="9" height="7" viewBox="0 0 9 7" ><path d="M0 0l3.500 3-3.500 3zM4.500 0l3.500 3-3.500 3z" fill="#d8d8d8"/></svg><div class="abs" style="left:0;top:11px;width:41px;height:654px;background:#535353;border-left:2px solid #2e2e2e;border-right:2px solid #2e2e2e"></div><div class="abs" style="left:2px;top:12px;width:37px;height:40px;border-bottom:1px solid #2e2e2e;border-top:1px solid #5e5e5e"></div><div class="abs" style="left:10px;top:16px;width:21px;height:4px;background:repeating-linear-gradient(90deg,#3a3a3a 0 1px,#5a5a5a 1px 2px)"></div><div class="abs" style="left:2px;top:54px;width:37px;height:40px;border-bottom:1px solid #2e2e2e;border-top:1px solid #5e5e5e"></div><div class="abs" style="left:10px;top:58px;width:21px;height:4px;background:repeating-linear-gradient(90deg,#3a3a3a 0 1px,#5a5a5a 1px 2px)"></div><div class="abs" style="left:2px;top:53px;width:37px;height:1px;background:#2e2e2e"></div><svg class="abs" style="left:11px;top:26px" width="22" height="20" viewBox="0 0 22 20" ><path d="M1 1.500h3M1 4.500h3M1 7.500h3" stroke="#e4e4e4" stroke-width="1.800"/><path d="M4.500 1.500h3.500M4.500 4.500h3.500M4.500 7.500h3.500" stroke="#b0b0b0" stroke-width="1.800"/><path d="M10.500 4c0-3.700 5-3.700 5 0 0 1.600-1 2.200-1 4.200v1.300h5v4.500h-14v-4.500h6v-1.300c0-2-1-2.600-1-4.200z" fill="#d0d0d0"/><rect x="6" y="15.500" width="13" height="1.500" fill="#d0d0d0"/></svg><svg class="abs" style="left:11px;top:67px" width="22" height="20" viewBox="0 0 22 20" ><path d="M1.500 2.500c1.500-2 5-2 6 0.500l-2.500 0.500-0.500 2 2 1.500 2-1c1 0.500 0.500 2-0.500 2.500l9.500 8c1.500 1.500-0.500 3.500-2 2l-9-9c-2.500 1.500-5.500-1-5-3.500z" fill="#cfcfcf"/><circle cx="16.500" cy="16.500" r="1.100" fill="#555"/><path d="M18 0.500l2 1.500-9 10-2.500-2.500z" fill="#d8d8d8"/><path d="M8 10l3 3-5.500 5.500c-1.500 1.500-4.500-1.500-3-3z" fill="#c4c4c4"/></svg><div id="panels"><div class="ptb" style="top:12px"><div class="ptab on" style="left:1px;width:37px">色板</div><div class="ptab" style="left:38px;width:48px">导航器</div><svg class="abs" style="left:310px;top:4px" width="16" height="9" viewBox="0 0 16 9" ><path d="M0 2.500h5l-2.500 3.500z" fill="#d0d0d0"/><path d="M6 0.500h8M6 2.500h8M6 4.500h8M6 6.500h8" stroke="#d0d0d0" stroke-width="1"/></svg></div><div class="ptb" style="top:33px"><div class="ptab on" style="left:1px;width:60px">画笔预设</div><svg class="abs" style="left:310px;top:4px" width="16" height="9" viewBox="0 0 16 9" ><path d="M0 2.500h5l-2.500 3.500z" fill="#d0d0d0"/><path d="M6 0.500h8M6 2.500h8M6 4.500h8M6 6.500h8" stroke="#d0d0d0" stroke-width="1"/></svg></div><div class="ptb" style="top:54px"><div class="ptab" style="left:1px;width:38px">图层</div><div class="ptab" style="left:39px;width:38px">通道</div><div class="ptab" style="left:77px;width:38px">路径</div><div class="ptab" style="left:115px;width:61px">历史记录</div><div class="ptab on" style="left:176px;width:36px">画笔</div><svg class="abs" style="left:310px;top:4px" width="16" height="9" viewBox="0 0 16 9" ><path d="M0 2.500h5l-2.500 3.500z" fill="#d0d0d0"/><path d="M6 0.500h8M6 2.500h8M6 4.500h8M6 6.500h8" stroke="#d0d0d0" stroke-width="1"/></svg></div><div id="pbody"><div class="pbtn" style="left:20px;top:8px;width:76px;height:18px">画笔预设</div><div id="blist"><div class="lrow" style="top:0;height:21px;border-bottom:1px solid #3e3e3e"><span style="position:absolute;left:20px;top:0;line-height:18px;font-size:12px;color:#c4c4c4">画笔笔尖形状</span></div><div class="lrow" style="top:21px;height:21px;border-bottom:1px solid #3e3e3e;"><div class="cb2" style="left:8px;top:4px"></div><span style="position:absolute;left:27px;top:1px;line-height:20px;font-size:12px;color:#c4c4c4">形状动态</span><svg class="abs" style="left:87px;top:4px" width="11" height="14" viewBox="0 0 11 14"><path d="M3 6v-2.500a2.500 2.500 0 0 1 5 0v2.500" fill="none" stroke="#868686" stroke-width="1.100"/><rect x="1" y="6.500" width="9" height="6" fill="none" stroke="#868686" stroke-width="1.100"/><rect x="5" y="8.500" width="1.500" height="2" fill="#868686"/></svg></div><div class="lrow" style="top:42px;height:21px;border-bottom:1px solid #3e3e3e;"><div class="cb2" style="left:8px;top:4px"></div><span style="position:absolute;left:27px;top:1px;line-height:20px;font-size:12px;color:#c4c4c4">散布</span><svg class="abs" style="left:87px;top:4px" width="11" height="14" viewBox="0 0 11 14"><path d="M3 6v-2.500a2.500 2.500 0 0 1 5 0v2.500" fill="none" stroke="#868686" stroke-width="1.100"/><rect x="1" y="6.500" width="9" height="6" fill="none" stroke="#868686" stroke-width="1.100"/><rect x="5" y="8.500" width="1.500" height="2" fill="#868686"/></svg></div><div class="lrow" style="top:63px;height:21px;border-bottom:1px solid #3e3e3e;"><div class="cb2" style="left:8px;top:4px"></div><span style="position:absolute;left:27px;top:1px;line-height:20px;font-size:12px;color:#c4c4c4">纹理</span><svg class="abs" style="left:87px;top:4px" width="11" height="14" viewBox="0 0 11 14"><path d="M3 6v-2.500a2.500 2.500 0 0 1 5 0v2.500" fill="none" stroke="#868686" stroke-width="1.100"/><rect x="1" y="6.500" width="9" height="6" fill="none" stroke="#868686" stroke-width="1.100"/><rect x="5" y="8.500" width="1.500" height="2" fill="#868686"/></svg></div><div class="lrow" style="top:84px;height:21px;border-bottom:1px solid #3e3e3e;"><div class="cb2" style="left:8px;top:4px"></div><span style="position:absolute;left:27px;top:1px;line-height:20px;font-size:12px;color:#c4c4c4">双重画笔</span><svg class="abs" style="left:87px;top:4px" width="11" height="14" viewBox="0 0 11 14"><path d="M3 6v-2.500a2.500 2.500 0 0 1 5 0v2.500" fill="none" stroke="#868686" stroke-width="1.100"/><rect x="1" y="6.500" width="9" height="6" fill="none" stroke="#868686" stroke-width="1.100"/><rect x="5" y="8.500" width="1.500" height="2" fill="#868686"/></svg></div><div class="lrow" style="top:105px;height:21px;border-bottom:1px solid #3e3e3e;"><div class="cb2" style="left:8px;top:4px"></div><span style="position:absolute;left:27px;top:1px;line-height:20px;font-size:12px;color:#c4c4c4">颜色动态</span><svg class="abs" style="left:87px;top:4px" width="11" height="14" viewBox="0 0 11 14"><path d="M3 6v-2.500a2.500 2.500 0 0 1 5 0v2.500" fill="none" stroke="#868686" stroke-width="1.100"/><rect x="1" y="6.500" width="9" height="6" fill="none" stroke="#868686" stroke-width="1.100"/><rect x="5" y="8.500" width="1.500" height="2" fill="#868686"/></svg></div><div class="lrow" style="top:126px;height:21px;border-bottom:1px solid #3e3e3e;"><div class="cb2" style="left:8px;top:4px"></div><span style="position:absolute;left:27px;top:1px;line-height:20px;font-size:12px;color:#c4c4c4">传递</span><svg class="abs" style="left:87px;top:4px" width="11" height="14" viewBox="0 0 11 14"><path d="M3 6v-2.500a2.500 2.500 0 0 1 5 0v2.500" fill="none" stroke="#868686" stroke-width="1.100"/><rect x="1" y="6.500" width="9" height="6" fill="none" stroke="#868686" stroke-width="1.100"/><rect x="5" y="8.500" width="1.500" height="2" fill="#868686"/></svg></div><div class="lrow" style="top:147px;height:21px;border-bottom:1px solid #3e3e3e;"><div class="cb2" style="left:8px;top:4px"></div><span style="position:absolute;left:27px;top:1px;line-height:20px;font-size:12px;color:#c4c4c4">画笔笔势</span><svg class="abs" style="left:87px;top:4px" width="11" height="14" viewBox="0 0 11 14"><path d="M3 6v-2.500a2.500 2.500 0 0 1 5 0v2.500" fill="none" stroke="#868686" stroke-width="1.100"/><rect x="1" y="6.500" width="9" height="6" fill="none" stroke="#868686" stroke-width="1.100"/><rect x="5" y="8.500" width="1.500" height="2" fill="#868686"/></svg></div><div class="lrow" style="top:169px;height:21px;"><div class="cb2" style="left:8px;top:4px"></div><span style="position:absolute;left:27px;top:1px;line-height:20px;font-size:12px;color:#c4c4c4">杂色</span><svg class="abs" style="left:87px;top:4px" width="11" height="14" viewBox="0 0 11 14"><path d="M3 6v-2.500a2.500 2.500 0 0 1 5 0v2.500" fill="none" stroke="#868686" stroke-width="1.100"/><rect x="1" y="6.500" width="9" height="6" fill="none" stroke="#868686" stroke-width="1.100"/><rect x="5" y="8.500" width="1.500" height="2" fill="#868686"/></svg></div><div class="lrow" style="top:190px;height:21px;"><div class="cb2" style="left:8px;top:4px"></div><span style="position:absolute;left:27px;top:1px;line-height:20px;font-size:12px;color:#c4c4c4">湿边</span><svg class="abs" style="left:87px;top:4px" width="11" height="14" viewBox="0 0 11 14"><path d="M3 6v-2.500a2.500 2.500 0 0 1 5 0v2.500" fill="none" stroke="#868686" stroke-width="1.100"/><rect x="1" y="6.500" width="9" height="6" fill="none" stroke="#868686" stroke-width="1.100"/><rect x="5" y="8.500" width="1.500" height="2" fill="#868686"/></svg></div><div class="lrow" style="top:211px;height:21px;"><div class="cb2" style="left:8px;top:4px"></div><span style="position:absolute;left:27px;top:1px;line-height:20px;font-size:12px;color:#c4c4c4">建立</span><svg class="abs" style="left:87px;top:4px" width="11" height="14" viewBox="0 0 11 14"><path d="M3 6v-2.500a2.500 2.500 0 0 1 5 0v2.500" fill="none" stroke="#868686" stroke-width="1.100"/><rect x="1" y="6.500" width="9" height="6" fill="none" stroke="#868686" stroke-width="1.100"/><rect x="5" y="8.500" width="1.500" height="2" fill="#868686"/></svg></div><div class="lrow" style="top:232px;height:21px;"><div class="cb2" style="left:8px;top:4px"></div><span style="position:absolute;left:27px;top:1px;line-height:20px;font-size:12px;color:#c4c4c4">平滑</span><svg class="abs" style="left:87px;top:4px" width="11" height="14" viewBox="0 0 11 14"><path d="M3 6v-2.500a2.500 2.500 0 0 1 5 0v2.500" fill="none" stroke="#868686" stroke-width="1.100"/><rect x="1" y="6.500" width="9" height="6" fill="none" stroke="#868686" stroke-width="1.100"/><rect x="5" y="8.500" width="1.500" height="2" fill="#868686"/></svg></div><div class="lrow" style="top:253px;height:21px;"><div class="cb2" style="left:8px;top:4px"></div><span style="position:absolute;left:27px;top:1px;line-height:20px;font-size:12px;color:#c4c4c4">保护纹理</span><svg class="abs" style="left:87px;top:4px" width="11" height="14" viewBox="0 0 11 14"><path d="M3 6v-2.500a2.500 2.500 0 0 1 5 0v2.500" fill="none" stroke="#868686" stroke-width="1.100"/><rect x="1" y="6.500" width="9" height="6" fill="none" stroke="#868686" stroke-width="1.100"/><rect x="5" y="8.500" width="1.500" height="2" fill="#868686"/></svg></div></div><div id="thumbs"><div class="abs" style="left:8px;top:2px;width:16px;height:16px;border-radius:8px;background:radial-gradient(#858585 20%,rgba(133,133,133,0) 70%)"></div><div class="abs" style="left:4px;top:20px;width:24px;text-align:center;font-size:9.500px;letter-spacing:-0.500px;line-height:12px;color:#959595">30</div><div class="abs" style="left:40px;top:2px;width:15px;height:15px;border-radius:8px;background:#848484"></div><div class="abs" style="left:36px;top:20px;width:24px;text-align:center;font-size:9.500px;letter-spacing:-0.500px;line-height:12px;color:#959595">30</div><div class="abs" style="left:72px;top:2px;width:15px;height:15px;border-radius:8px;background:#848484"></div><div class="abs" style="left:68px;top:20px;width:24px;text-align:center;font-size:9.500px;letter-spacing:-0.500px;line-height:12px;color:#959595">30</div><svg class="abs" style="left:104px;top:6px" width="18" height="8" viewBox="0 0 18 8" ><path d="M1 3h4v2h-4z" fill="#707070"/><path d="M5 1.500h6l5 2.500-5 2.500h-6z" fill="#7a7a7a"/></svg><div class="abs" style="left:100px;top:20px;width:24px;text-align:center;font-size:9.500px;letter-spacing:-0.500px;line-height:12px;color:#959595">25</div><svg class="abs" style="left:136px;top:6px" width="18" height="8" viewBox="0 0 18 8" ><path d="M1 1h2v6h-2zM4 1h1v6h-1z" fill="#777"/><rect x="6" y="1" width="8" height="6" fill="#7c7c7c"/></svg><div class="abs" style="left:132px;top:20px;width:24px;text-align:center;font-size:9.500px;letter-spacing:-0.500px;line-height:12px;color:#959595">25</div><svg class="abs" style="left:8px;top:38px" width="18" height="8" viewBox="0 0 18 8" ><path d="M1 1h2v6h-2zM4 1h1v6h-1z" fill="#777"/><rect x="6" y="1" width="8" height="6" fill="#7c7c7c"/></svg><div class="abs" style="left:4px;top:52px;width:24px;text-align:center;font-size:9.500px;letter-spacing:-0.500px;line-height:12px;color:#959595">25</div><svg class="abs" style="left:40px;top:38px" width="18" height="8" viewBox="0 0 18 8" ><path d="M1 1h2v6h-2zM4 1h1v6h-1z" fill="#777"/><rect x="6" y="1" width="8" height="6" fill="#7c7c7c"/></svg><div class="abs" style="left:36px;top:52px;width:24px;text-align:center;font-size:9.500px;letter-spacing:-0.500px;line-height:12px;color:#959595">36</div><svg class="abs" style="left:72px;top:36px" width="18" height="12" viewBox="0 0 18 12" ><path d="M1 5h6v3h-6z" fill="#7a7a7a"/><path d="M7 5l5-4v11l-5-4z" fill="#7c7c7c"/></svg><div class="abs" style="left:68px;top:52px;width:24px;text-align:center;font-size:9.500px;letter-spacing:-0.500px;line-height:12px;color:#959595">25</div><svg class="abs" style="left:104px;top:38px" width="18" height="8" viewBox="0 0 18 8" ><path d="M1 1h2v6h-2zM4 1h1v6h-1z" fill="#777"/><rect x="6" y="1" width="8" height="6" fill="#7c7c7c"/></svg><div class="abs" style="left:100px;top:52px;width:24px;text-align:center;font-size:9.500px;letter-spacing:-0.500px;line-height:12px;color:#959595">36</div><svg class="abs" style="left:136px;top:38px" width="18" height="8" viewBox="0 0 18 8" ><path d="M1 1h2v6h-2zM4 1h1v6h-1z" fill="#777"/><rect x="6" y="1" width="8" height="6" fill="#7c7c7c"/></svg><div class="abs" style="left:132px;top:52px;width:24px;text-align:center;font-size:9.500px;letter-spacing:-0.500px;line-height:12px;color:#959595">36</div><svg class="abs" style="left:8px;top:70px" width="18" height="8" viewBox="0 0 18 8" ><path d="M1 1h2v6h-2zM4 1h1v6h-1z" fill="#777"/><rect x="6" y="1" width="8" height="6" fill="#7c7c7c"/></svg><div class="abs" style="left:4px;top:84px;width:24px;text-align:center;font-size:9.500px;letter-spacing:-0.500px;line-height:12px;color:#959595">36</div><svg class="abs" style="left:40px;top:70px" width="18" height="8" viewBox="0 0 18 8" ><path d="M1 1h2v6h-2zM4 1h1v6h-1z" fill="#777"/><rect x="6" y="1" width="8" height="6" fill="#7c7c7c"/></svg><div class="abs" style="left:36px;top:84px;width:24px;text-align:center;font-size:9.500px;letter-spacing:-0.500px;line-height:12px;color:#959595">32</div><svg class="abs" style="left:72px;top:68px" width="18" height="12" viewBox="0 0 18 12" ><path d="M1 5h6v3h-6z" fill="#7a7a7a"/><path d="M7 5l5-4v11l-5-4z" fill="#7c7c7c"/></svg><div class="abs" style="left:68px;top:84px;width:24px;text-align:center;font-size:9.500px;letter-spacing:-0.500px;line-height:12px;color:#959595">25</div><svg class="abs" style="left:104px;top:70px" width="18" height="8" viewBox="0 0 18 8" ><path d="M1 1h2v6h-2zM4 1h1v6h-1z" fill="#777"/><rect x="6" y="1" width="8" height="6" fill="#7c7c7c"/></svg><div class="abs" style="left:100px;top:84px;width:24px;text-align:center;font-size:9.500px;letter-spacing:-0.500px;line-height:12px;color:#959595">50</div><svg class="abs" style="left:136px;top:70px" width="18" height="8" viewBox="0 0 18 8" ><path d="M1 1.500h9l5 2.500-5 2.500h-9z" fill="#7a7a7a"/></svg><div class="abs" style="left:132px;top:84px;width:24px;text-align:center;font-size:9.500px;letter-spacing:-0.500px;line-height:12px;color:#959595">25</div><svg class="abs" style="left:8px;top:102px" width="18" height="8" viewBox="0 0 18 8" ><path d="M1 1.500h9l5 2.500-5 2.500h-9z" fill="#7a7a7a"/></svg><div class="abs" style="left:4px;top:116px;width:24px;text-align:center;font-size:9.500px;letter-spacing:-0.500px;line-height:12px;color:#959595">25</div><svg class="abs" style="left:40px;top:101px" width="18" height="10" viewBox="0 0 18 10" ><path d="M1 7h12l4-1.500-4-1.500h-9z" fill="#7a7a7a"/><path d="M5 3h6l2 1h-9z" fill="#707070"/></svg><div class="abs" style="left:36px;top:116px;width:24px;text-align:center;font-size:9.500px;letter-spacing:-0.500px;line-height:12px;color:#959595">50</div><svg class="abs" style="left:72px;top:101px" width="18" height="10" viewBox="0 0 18 10" ><path d="M1 7h12l4-1.500-4-1.500h-9z" fill="#7a7a7a"/><path d="M5 3h6l2 1h-9z" fill="#707070"/></svg><div class="abs" style="left:68px;top:116px;width:24px;text-align:center;font-size:9.500px;letter-spacing:-0.500px;line-height:12px;color:#959595">71</div><svg class="abs" style="left:104px;top:101px" width="18" height="10" viewBox="0 0 18 10" ><path d="M1 7h12l4-1.500-4-1.500h-9z" fill="#7a7a7a"/><path d="M5 3h6l2 1h-9z" fill="#707070"/></svg><div class="abs" style="left:100px;top:116px;width:24px;text-align:center;font-size:9.500px;letter-spacing:-0.500px;line-height:12px;color:#959595">25</div><svg class="abs" style="left:136px;top:101px" width="18" height="10" viewBox="0 0 18 10" ><path d="M1 7h12l4-1.500-4-1.500h-9z" fill="#7a7a7a"/><path d="M5 3h6l2 1h-9z" fill="#707070"/></svg><div class="abs" style="left:132px;top:116px;width:24px;text-align:center;font-size:9.500px;letter-spacing:-0.500px;line-height:12px;color:#959595">50</div><svg class="abs" style="left:8px;top:133px" width="18" height="10" viewBox="0 0 18 10" ><path d="M1 7h12l4-1.500-4-1.500h-9z" fill="#7a7a7a"/><path d="M5 3h6l2 1h-9z" fill="#707070"/></svg><div class="abs" style="left:4px;top:148px;width:24px;text-align:center;font-size:9.500px;letter-spacing:-0.500px;line-height:12px;color:#959595">50</div><svg class="abs" style="left:40px;top:133px" width="18" height="10" viewBox="0 0 18 10" ><path d="M1 7h12l4-1.500-4-1.500h-9z" fill="#7a7a7a"/><path d="M5 3h6l2 1h-9z" fill="#707070"/></svg><div class="abs" style="left:36px;top:148px;width:24px;text-align:center;font-size:9.500px;letter-spacing:-0.500px;line-height:12px;color:#959595">50</div><svg class="abs" style="left:72px;top:133px" width="18" height="10" viewBox="0 0 18 10" ><path d="M1 7h12l4-1.500-4-1.500h-9z" fill="#7a7a7a"/><path d="M5 3h6l2 1h-9z" fill="#707070"/></svg><div class="abs" style="left:68px;top:148px;width:24px;text-align:center;font-size:9.500px;letter-spacing:-0.500px;line-height:12px;color:#959595">50</div><svg class="abs" style="left:104px;top:134px" width="18" height="8" viewBox="0 0 18 8" ><path d="M1 1h2v6h-2zM4 1h1v6h-1z" fill="#777"/><rect x="6" y="1" width="8" height="6" fill="#7c7c7c"/></svg><div class="abs" style="left:100px;top:148px;width:24px;text-align:center;font-size:9.500px;letter-spacing:-0.500px;line-height:12px;color:#959595">36</div><svg class="abs" style="left:136px;top:133px" width="18" height="10" viewBox="0 0 18 10" ><path d="M1 7h12l4-1.500-4-1.500h-9z" fill="#7a7a7a"/><path d="M5 3h6l2 1h-9z" fill="#707070"/></svg><div class="abs" style="left:132px;top:148px;width:24px;text-align:center;font-size:9.500px;letter-spacing:-0.500px;line-height:12px;color:#959595">30</div><svg class="abs" style="left:8px;top:165px" width="18" height="10" viewBox="0 0 18 10" ><path d="M1 7h12l4-1.500-4-1.500h-9z" fill="#7a7a7a"/><path d="M5 3h6l2 1h-9z" fill="#707070"/></svg><div class="abs" style="left:4px;top:180px;width:24px;text-align:center;font-size:9.500px;letter-spacing:-0.500px;line-height:12px;color:#959595">30</div><svg class="abs" style="left:40px;top:166px" width="18" height="8" viewBox="0 0 18 8" ><path d="M1 1.500h9l5 2.500-5 2.500h-9z" fill="#7a7a7a"/></svg><div class="abs" style="left:36px;top:180px;width:24px;text-align:center;font-size:9.500px;letter-spacing:-0.500px;line-height:12px;color:#959595">20</div><svg class="abs" style="left:72px;top:166px" width="18" height="8" viewBox="0 0 18 8" ><path d="M1 1.500h9l5 2.500-5 2.500h-9z" fill="#7a7a7a"/></svg><div class="abs" style="left:68px;top:180px;width:24px;text-align:center;font-size:9.500px;letter-spacing:-0.500px;line-height:12px;color:#959595">9</div><svg class="abs" style="left:104px;top:166px" width="18" height="8" viewBox="0 0 18 8" ><path d="M1 1.500h9l5 2.500-5 2.500h-9z" fill="#7a7a7a"/></svg><div class="abs" style="left:100px;top:180px;width:24px;text-align:center;font-size:9.500px;letter-spacing:-0.500px;line-height:12px;color:#959595">30</div><svg class="abs" style="left:136px;top:166px" width="18" height="8" viewBox="0 0 18 8" ><path d="M1 1.500h9l5 2.500-5 2.500h-9z" fill="#7a7a7a"/></svg><div class="abs" style="left:132px;top:180px;width:24px;text-align:center;font-size:9.500px;letter-spacing:-0.500px;line-height:12px;color:#959595">9</div><div class="abs" style="left:161px;top:0;width:23px;height:195px;background:#505050"></div><div class="abs" style="left:184px;top:0;width:18px;height:195px;background:#3e3e3e"></div></div><div class="abs" style="left:121px;top:211px;line-height:16px;font-size:12px;color:#c0c0c0;white-space:nowrap">大小</div><svg class="abs" style="left:234px;top:212px" width="14" height="14" viewBox="0 0 14 14" ><path d="M3.500 5.500a4 4 0 1 1 2 5.800" fill="none" stroke="#a8a8a8" stroke-width="1.400"/><path d="M0.500 5l3.500-3 1 4.500z" fill="#a8a8a8"/><path d="M1 13h12" stroke="#a8a8a8" stroke-width="1"/></svg><div class="abs" style="left:258px;top:209px;width:63px;height:19px;background:#484848;border:1px solid #414141;border-top-color:#3c3c3c"></div><div class="abs" style="left:120px;top:237px;width:201px;height:5px;background:#484848;border-top:1px solid #3a3a3a;border-bottom:1px solid #5e5e5e;border-radius:3px"></div><div class="cb2" style="left:120px;top:256px"></div><div class="abs" style="left:139px;top:256px;line-height:16px;font-size:12px;color:#c0c0c0;white-space:nowrap">翻转 X</div><div class="cb2" style="left:178px;top:256px"></div><div class="abs" style="left:197px;top:256px;line-height:16px;font-size:12px;color:#c0c0c0;white-space:nowrap">翻转 Y</div><div class="abs" style="left:252px;top:261px;width:73px;height:73px;background:#3b3b3b"></div><div class="abs" style="left:138px;top:289px;line-height:16px;font-size:12px;color:#c0c0c0;white-space:nowrap">角度:</div><div class="abs" style="left:174px;top:287px;width:58px;height:19px;background:#484848;border:1px solid #414141;border-top-color:#3c3c3c"></div><div class="abs" style="left:138px;top:318px;line-height:16px;font-size:12px;color:#c0c0c0;white-space:nowrap">圆度:</div><div class="abs" style="left:174px;top:316px;width:58px;height:19px;background:#484848;border:1px solid #414141;border-top-color:#3c3c3c"></div><div class="abs" style="left:121px;top:342px;line-height:16px;font-size:12px;color:#c0c0c0;white-space:nowrap">硬度</div><div class="abs" style="left:264px;top:341px;width:57px;height:19px;background:#484848;border:1px solid #414141;border-top-color:#3c3c3c"></div><div class="abs" style="left:120px;top:367px;width:201px;height:5px;background:#484848;border-top:1px solid #3a3a3a;border-bottom:1px solid #5e5e5e;border-radius:3px"></div><div class="cb2" style="left:120px;top:388px"></div><div class="abs" style="left:140px;top:388px;line-height:16px;font-size:12px;color:#c0c0c0;white-space:nowrap">间距</div><div class="abs" style="left:264px;top:386px;width:57px;height:19px;background:#484848;border:1px solid #414141;border-top-color:#3c3c3c"></div><div class="abs" style="left:120px;top:412px;width:201px;height:5px;background:#484848;border-top:1px solid #3a3a3a;border-bottom:1px solid #5e5e5e;border-radius:3px"></div><div class="abs" style="left:6px;top:485px;width:316px;height:84px;border:1px solid #444;border-bottom-color:#626262;border-right-color:#5e5e5e"></div><svg class="abs" style="left:259px;top:579px" width="11" height="9" viewBox="0 0 11 9" ><rect x="0.500" y="0.500" width="10" height="8" fill="none" stroke="#8c8c8c"/><rect x="5" y="0" width="6" height="4" fill="#8c8c8c"/></svg><svg class="abs" style="left:288px;top:580px" width="9" height="8" viewBox="0 0 9 8" ><rect x="0" y="0" width="9" height="8" fill="#888"/></svg></div></div><div id="speed"><div class="ring"></div><div class="inner"><div class="pct">67<span>%</span></div><div class="rate"><b>↓</b>156K/s</div></div></div></div>
<div id="taskbar"><div id="orb"><svg width="38" height="38" viewBox="0 0 38 38"><defs><linearGradient id="og" x1="0" y1="0" x2="0" y2="1"><stop offset="0" stop-color="#9ab8d2"/><stop offset="0.300" stop-color="#4a86ba"/><stop offset="0.550" stop-color="#14508e"/><stop offset="0.800" stop-color="#1590d0"/><stop offset="1" stop-color="#27c0f0"/></linearGradient></defs><circle cx="19" cy="19" r="17.500" fill="url(#og)" stroke="#a8c4dc" stroke-width="1.200"/><path d="M10.500 9.500c3-2 6-1.500 8.500 0l-1.800 7.500c-2.500-1.500-5.500-1.800-8.500 0z" fill="#f06428"/><path d="M20 10c2.500 1.500 5.500 2 8.500 0l-1.800 7.500c-3 2-6 1.500-8.500 0z" fill="#8cc63e"/><path d="M8 18.500c3-2 6-1.500 8.500 0l-1.800 7.500c-2.500-1.500-5.500-1.800-8.500 0z" fill="#3aa0e8"/><path d="M17.500 19c2.500 1.500 5.500 2 8.500 0l-1.800 7.500c-3 2-6 1.500-8.500 0z" fill="#f8c420"/></svg></div><svg class="abs" style="left:68px;top:2px" width="34" height="34" viewBox="0 0 34 34" ><path d="M14 18.500c-7 3-13-1-12-8 1-6 8-8 12-5 3 2.500 3.500 9 0 13z" fill="#8fce2c"/><path d="M15.500 14.500c-3-7 1-13 8-12 6 1 8 8 5 12-2.500 3-9 3.500-13 0z" fill="#3f97ea"/><path d="M19.500 16c7-3 13 1 12 8-1 6-8 8-12 5-3-2.500-3.500-9 0-13z" fill="#e8503c"/><path d="M18.500 20c3 7-1 13-8 12-6-1-8-8-5-12 2.500-3 9-3.500 13 0z" fill="#f4c41a"/></svg><div class="abs" style="left:114px;top:2px;width:144px;height:34px;background:#f2f2f2"></div><svg class="abs" style="left:117px;top:7px" width="24" height="24" viewBox="0 0 20 20"><path d="M3 10.500c0-4.500 3-7 6.500-7s6 2.500 6 6.500h-9c0.200 2 1.500 3.200 3.300 3.200 1.300 0 2.300-0.500 2.900-1.500h2.600c-0.900 2.700-3 4-5.700 4-3.800 0-6.600-2-6.600-5.200zM6.600 8h6c-0.300-1.500-1.400-2.300-3-2.300s-2.700 0.800-3 2.300z" fill="#3388e4"/><path d="M2.500 13.500c-1.500 3-0.500 4.500 3 3M13 3.500c3-1.800 5-1 3.500 2.500" fill="none" stroke="#58aaf0" stroke-width="1.300"/></svg><svg class="abs" style="left:142px;top:17px" width="6" height="4" viewBox="0 0 6 4" ><path d="M0 4l3-4 3 4z" fill="#9a9a9a"/></svg><div class="abs" style="left:153px;top:2px;line-height:36px;font-size:12px;color:#222">微数据</div><div class="abs" style="left:258px;top:2px;width:56px;height:34px;background:#2d8cf5;color:#fff;font-size:12px;line-height:36px;text-align:center">搜索一下</div><div class="tbtn" style="left:320px"></div><div class="tbtn on" style="left:444px"></div><div class="tbtn" style="left:506px"></div><svg class="abs" style="left:334px;top:4px" width="32" height="32" viewBox="0 0 32 32" ><circle cx="15" cy="17" r="12.500" fill="#4cb830" stroke="#d8f0c8" stroke-width="2"/><path d="M8.500 17.500c0-4.500 3-7 6.500-7s6 2.500 6 6.500h-9c0.300 2 1.500 3 3.300 3 1.300 0 2.300-0.500 2.900-1.500h2.600c-0.900 2.700-3 4-5.700 4-3.800 0-6.600-2-6.600-5zM12.100 15h6c-0.300-1.500-1.400-2.300-3-2.300s-2.700 0.800-3 2.300z" fill="#fff"/><path d="M22 4.500c3-2 6-2 5 1" fill="none" stroke="#e8f8e0" stroke-width="1.600"/></svg><svg class="abs" style="left:396px;top:5px" width="32" height="30" viewBox="0 0 32 30" ><ellipse cx="15" cy="17" rx="13.500" ry="11" fill="#e6e9ee"/><rect x="10" y="3" width="14" height="12" fill="#8ea6bc"/><circle cx="15" cy="17" r="6.500" fill="#6a8cb0"/><circle cx="15" cy="17" r="2.500" fill="#e8eef4"/><rect x="17" y="6" width="9" height="7" fill="#c8d4e0"/></svg><div class="abs" style="left:459px;top:6px;width:28px;height:26px;background:#1a1a5a;border:2px solid #8eaee0;color:#a6c4f2;font-weight:bold;font-size:15.500px;line-height:21px;text-align:center;letter-spacing:-0.300px">Ps</div><svg class="abs" style="left:518px;top:6px" width="34" height="30" viewBox="0 0 34 30" ><ellipse cx="11" cy="9.500" rx="10.500" ry="8.500" fill="#2fc14a"/><path d="M5 16l-1.500 4 5-3z" fill="#2fc14a"/><circle cx="7.500" cy="7" r="1.300" fill="#1a7a2c"/><circle cx="14.500" cy="7" r="1.300" fill="#1a7a2c"/><ellipse cx="23" cy="18.500" rx="9.500" ry="7.500" fill="#f2f2f2"/><path d="M28 24l2 4-5.500-2.500z" fill="#f2f2f2"/><circle cx="20" cy="16.500" r="1.100" fill="#c06a7a"/><circle cx="26" cy="16.500" r="1.100" fill="#c06a7a"/></svg><svg class="abs" style="left:833px;top:10px" width="17" height="17" viewBox="0 0 17 17" ><defs><radialGradient id="ib" cx="40%" cy="35%" r="70%"><stop offset="0" stop-color="#6aa0e8"/><stop offset="1" stop-color="#16388a"/></radialGradient></defs><circle cx="8" cy="8.500" r="8" fill="url(#ib)"/><text x="8" y="12" text-anchor="middle" font-size="9" font-weight="bold" fill="#fff" font-family="Noto Sans CJK SC, sans-serif">拼</text><circle cx="13" cy="13.500" r="2.500" fill="#f0b428"/></svg><svg class="abs" style="left:857px;top:10px" width="16" height="16" viewBox="0 0 16 16" ><circle cx="8" cy="8" r="7.300" fill="#1c2fa8" stroke="#c8d0f0" stroke-width="1.200"/><text x="8" y="12.500" text-anchor="middle" font-size="12" font-weight="bold" fill="#fff" font-family="Liberation Sans, sans-serif">?</text></svg><div class="abs" style="left:877px;top:9px;font-size:15px;line-height:18px;font-weight:bold;color:#f4f4f4">中</div><svg class="abs" style="left:896px;top:10px" width="15" height="16" viewBox="0 0 15 16" ><path d="M9 0.500c4.500 2.500 5.500 9 1 12.500-3 2.200-7 1.800-9.500-0.500 4.500 0.500 8-1.500 8.800-5.500 0.400-2.300 0.200-4.500-0.300-6.500z" fill="#f0f0f0"/></svg><svg class="abs" style="left:919px;top:11px" width="12" height="16" viewBox="0 0 12 16" ><circle cx="3.500" cy="3.500" r="2.300" fill="none" stroke="#f0f0f0" stroke-width="1.400"/><path d="M8 9.500c1.500 0 2 2-1 4.500" fill="none" stroke="#f0f0f0" stroke-width="1.800"/></svg><svg class="abs" style="left:936px;top:12px" width="17" height="12" viewBox="0 0 17 12" ><rect x="0.700" y="0.700" width="15" height="10" rx="1" fill="none" stroke="#f0f0f0" stroke-width="1.400"/><path d="M3 3.500h11M3 5.800h11" stroke="#f0f0f0" stroke-width="1.300" stroke-dasharray="1.500 1"/><path d="M4 8.300h9" stroke="#f0f0f0" stroke-width="1.300"/></svg><svg class="abs" style="left:957px;top:8px" width="15" height="20" viewBox="0 0 15 20" ><rect x="4.500" y="1" width="6" height="11" rx="3" fill="#f0f0f0"/><path d="M1.500 8.500c0 8 12 8 12 0M7.500 14.500v3M4 18h7" fill="none" stroke="#f0f0f0" stroke-width="1.400"/></svg><svg class="abs" style="left:975px;top:9px" width="18" height="18" viewBox="0 0 18 18" ><circle cx="9" cy="9" r="4.600" fill="none" stroke="#f0f0f0" stroke-width="2.600"/><path d="M9 0.500v3M9 14.500v3M0.500 9h3M14.500 9h3M3 3l2.100 2.100M12.900 12.900l2.100 2.100M15 3l-2.100 2.100M5.100 12.900l-2.100 2.100" stroke="#f0f0f0" stroke-width="2.400"/></svg><svg class="abs" style="left:1000px;top:8px" width="12" height="8" viewBox="0 0 12 8" ><rect x="3.500" y="0.500" width="7" height="4" fill="none" stroke="#eee" stroke-width="1"/><rect x="0.500" y="3" width="7" height="4" fill="#222" stroke="#eee" stroke-width="1"/></svg><svg class="abs" style="left:1002px;top:20px" width="7" height="4" viewBox="0 0 7 4" ><path d="M0 0h7l-3.500 4z" fill="#f0f0f0"/></svg><svg class="abs" style="left:1047px;top:13px" width="15" height="17" viewBox="0 0 15 17" ><ellipse cx="7.500" cy="5" rx="4" ry="4.500" fill="#e8e8e8"/><path d="M2 16c-1-5 1-8 5.500-8s6.500 3 5.500 8z" fill="#d8d8d8"/><circle cx="6" cy="4" r="0.900" fill="#222"/><circle cx="9" cy="4" r="0.900" fill="#222"/><path d="M1 16.500h13" stroke="#aaa" stroke-width="1"/></svg><svg class="abs" style="left:1071px;top:13px" width="14" height="18" viewBox="0 0 14 18" ><path d="M2 1c1.500 1.500 2.500 3 3 5.500l-0.500 10" fill="none" stroke="#b8c4d0" stroke-width="1.600"/><path d="M4.500 5.500l8.500 6" stroke="#e89a28" stroke-width="2"/></svg><svg class="abs" style="left:1093px;top:13px" width="18" height="16" viewBox="0 0 18 16" ><ellipse cx="6.500" cy="6" rx="6" ry="5" fill="#2fc14a"/><ellipse cx="12" cy="10.500" rx="5" ry="4" fill="#e8f0e8"/></svg><svg class="abs" style="left:1118px;top:13px" width="16" height="16" viewBox="0 0 16 16" ><circle cx="8" cy="8" r="7" fill="#4cb830" stroke="#c8ecc0" stroke-width="1.200"/><path d="M4.500 8.500c0-2.500 1.500-4 3.500-4s3.500 1.500 3.500 3.800h-5c0.200 1.200 0.800 1.700 1.800 1.700 0.700 0 1.200-0.300 1.600-0.800h1.500c-0.500 1.500-1.700 2.200-3.100 2.200-2.300 0-3.800-1.200-3.800-2.900z" fill="#fff"/></svg><svg class="abs" style="left:1142px;top:11px" width="14" height="20" viewBox="0 0 14 20" ><rect x="3" y="4" width="8" height="12" fill="none" stroke="#e8e8e8" stroke-width="1.300"/><rect x="5" y="1.500" width="4" height="2.500" fill="#e8e8e8"/><path d="M1 7l9 9M10 7l-9 9" stroke="#e02020" stroke-width="2"/><path d="M9 5.500h4M11 3.500v6" stroke="#fff" stroke-width="1.600"/></svg><svg class="abs" style="left:1165px;top:12px" width="17" height="17" viewBox="0 0 17 17" ><circle cx="8.500" cy="8.500" r="8" fill="#e6d81e"/><path d="M2 12a8 8 0 0 0 13 0z" fill="#5ab02a"/><path d="M8.500 4v9M4 8.500h9" stroke="#2e8a1e" stroke-width="2.400"/></svg><svg class="abs" style="left:1190px;top:12px" width="17" height="17" viewBox="0 0 17 17" ><path d="M1 6h3.500l4-4v13l-4-4h-3.500z" fill="#f0f0f0"/><path d="M10.500 5.500c1.500 1.500 1.500 4.500 0 6M12.500 3.500c3 3 3 7.500 0 10.500" fill="none" stroke="#f0f0f0" stroke-width="1.200"/></svg><svg class="abs" style="left:1214px;top:13px" width="17" height="14" viewBox="0 0 17 14" ><rect x="0" y="10" width="2" height="3" fill="#f0f0f0"/><rect x="3.500" y="8" width="2" height="5" fill="#f0f0f0"/><rect x="7" y="5.500" width="2" height="7.500" fill="#f0f0f0"/><rect x="10.500" y="3" width="2" height="10" fill="#f0f0f0"/><rect x="14" y="0.500" width="2" height="12.500" fill="#f0f0f0"/></svg><div class="abs" style="left:1245px;top:5px;width:60px;text-align:center;font-size:12px;line-height:15px;color:#f4f4f4">20:27</div><div class="abs" style="left:1241px;top:21px;width:70px;text-align:center;font-size:13px;line-height:15px;color:#f4f4f4">2021/11/9</div><svg class="abs" style="left:1322px;top:12px" width="20" height="18" viewBox="0 0 20 18" ><path d="M4 0.500h15v13h-15z" fill="#ececec"/><path d="M6 3.500h11M6 6.500h11M6 9.500h11" stroke="#555" stroke-width="1.200"/><path d="M1.500 1v16.500" stroke="#f0f0f0" stroke-width="1.800"/></svg><div class="abs" style="left:1334px;top:21px;width:14px;height:13px;background:#e01818;color:#fff;font-size:10px;line-height:13px;text-align:center;font-weight:bold">1</div><div class="abs" style="left:1352px;top:1px;width:14px;height:39px;border-left:1px solid #5a5a5a;background:linear-gradient(90deg,#2a2a2a,#111)"></div></div>
<div id="dlg"><div class="ttl">新建工作区</div><div class="xbtn"><svg width="46" height="19" viewBox="0 0 46 19"><path d="M18.500 5.500l9 8M27.500 5.500l-9 8" stroke="#6a4a44" stroke-width="4.400" fill="none"/><path d="M18.500 5.500l9 8M27.500 5.500l-9 8" stroke="#fff" stroke-width="2.800" fill="none"/></svg></div><div class="client"><div class="abs" style="left:17px;top:12px;line-height:16px;font-size:12px;color:#000;white-space:nowrap;letter-spacing:0.400px">名称(N):</div><div class="abs" style="left:68px;top:9px;width:209px;height:20px;background:#fff;border:1px solid #7da2ce;border-radius:2px;box-shadow:0 0 0 1px #dce8f6 inset"><span style="position:absolute;left:3px;top:1px;line-height:16px;font-size:12px;color:#000;white-space:nowrap">独家记忆</span><span style="position:absolute;left:52px;top:2px;width:1px;height:14px;background:#000"></span></div><div class="abs" style="left:10px;top:45px;width:268px;height:95px;border:1px solid #d0d0d0;border-radius:3px;box-shadow:0 0 0 1px #fff inset"></div><div class="abs" style="left:27px;top:36px;width:38px;height:16px;background:#f0f0f0;line-height:16px;font-size:12.500px;color:#000;text-align:center;letter-spacing:1px">捕捉</div><div class="abs" style="left:20px;top:62px;line-height:14px;font-size:12px;color:#000;white-space:nowrap">面板位置将存储在此工作区中。<br>键盘快捷键和菜单是可选的。</div><div class="abs" style="left:20px;top:98px;width:13px;height:13px"><svg width="13" height="13" viewBox="0 0 13 13" style="position:absolute;left:0;top:0"><rect x="0.500" y="0.500" width="12" height="12" fill="#f4f4f4" stroke="#8e8f8f"/><rect x="2.500" y="2.500" width="8" height="8" fill="#e4e8ee" stroke="#c0c4cc"/><path d="M3.500 6.500l2 2.500 4-6" fill="none" stroke="#31347c" stroke-width="1.700"/></svg></div><div class="abs" style="left:36px;top:96px;line-height:16px;font-size:12px;color:#000;white-space:nowrap;letter-spacing:0.300px">键盘快捷键(K)</div><div class="abs" style="left:20px;top:119px;width:13px;height:13px"><svg width="13" height="13" viewBox="0 0 13 13" style="position:absolute;left:0;top:0"><rect x="0.500" y="0.500" width="12" height="12" fill="#f4f4f4" stroke="#8e8f8f"/><rect x="2.500" y="2.500" width="8" height="8" fill="#e4e8ee" stroke="#c0c4cc"/><path d="M3.500 6.500l2 2.500 4-6" fill="none" stroke="#31347c" stroke-width="1.700"/></svg></div><div class="abs" style="left:36px;top:117px;line-height:16px;font-size:12px;color:#000;white-space:nowrap;letter-spacing:0.300px">菜单(M)</div><div class="wbtn def" style="left:294px;top:10px">存储</div><div class="wbtn" style="left:294px;top:38px">取消</div></div></div>
<div id="wm"><b>头条</b> @乐乐带你学设计</div>
</div>
</body></html>
